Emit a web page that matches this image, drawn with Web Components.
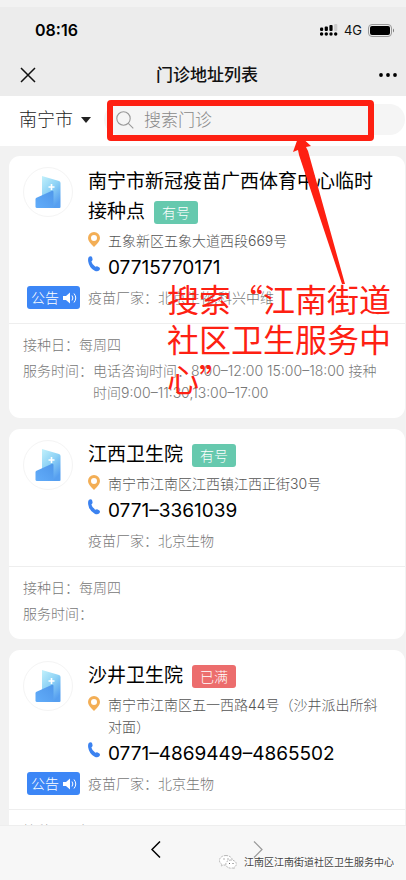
<!DOCTYPE html>
<html lang="zh-CN">
<head>
<meta charset="utf-8">
<meta name="viewport" content="width=device-width, initial-scale=1">
<title>门诊地址列表</title>
<style>
  html, body { margin: 0; height: 100%; }
  body { font-family: Inter, "Noto Sans CJK SC", sans-serif; font-weight: 300; color: #111; background: #f2f2f2; }
</style>
</head>
<body>
<clinic-app></clinic-app>
<script>
const define = (name, html, setup) => {
  const tpl = document.createElement('template');
  tpl.innerHTML = html;
  customElements.define(name, class extends HTMLElement {
    connectedCallback() {
      if (this.shadowRoot) return;
      const root = this.attachShadow({ mode: 'open' });
      root.append(tpl.content.cloneNode(true));
      if (setup) setup(this, root);
    }
  });
};

define('status-bar', `
<style>
  :host { display: flex; align-items: center; justify-content: space-between; height: 46px; margin-top: 7px; padding: 0 12px 0 35px; background: #ececec; }
  time { font-size: 16px; font-weight: 600; color: #000; }
  div { display: flex; align-items: center; gap: 6px; font-size: 13px; font-weight: 400; }
  svg { display: block; }
</style>
<time>08:16</time>
<div>
  <svg width="18" height="12" viewBox="0 0 18 12"><g fill="#000"><rect x="0" y="3.500" width="3.200" height="3.500" rx="1.200"/><rect x="4.700" y="2.500" width="3.200" height="4.500" rx="1"/><rect x="9.400" y="1" width="3.200" height="6" rx="1"/><circle cx="1.600" cy="10" r="1.700"/><circle cx="6.300" cy="10" r="1.700"/><circle cx="11" cy="10" r="1.700"/><circle cx="15.700" cy="10" r="1.700"/></g><rect x="14.100" y="0" width="3.200" height="7" rx="1" fill="#ccc"/></svg>
  <span>4G</span>
  <svg width="26" height="13" viewBox="0 0 26 13"><rect x=".5" y=".5" width="23" height="12" rx="3.500" fill="none" stroke="#999"/><rect x="2" y="2" width="20" height="9" rx="2"/><path d="M25 4.500v4q1-.6 1-2t-1-2z" fill="#777"/></svg>
</div>`);

define('nav-bar', `
<style>
  :host { display: grid; grid-template-columns: 40px 1fr 32px; align-items: center; height: 43px; padding: 0 8px; background: #ececec; }
  h1 { margin: 0; font-size: 17px; line-height: 24px; font-weight: 500; text-align: center; }
  button { border: 0; padding: 0; background: none; display: flex; height: 32px; align-items: center; justify-content: center; color: #111; }
  .more { justify-content: flex-end; }
</style>
<button aria-label="关闭"><svg width="16" height="16" viewBox="0 0 16 16" stroke="currentColor" stroke-width="1.500"><path d="M1 1l14 14M15 1L1 15"/></svg></button>
<h1><slot></slot></h1>
<button class="more" aria-label="更多"><svg width="20" height="6" viewBox="0 0 20 6"><circle cx="3" cy="3" r="1.900"/><circle cx="10" cy="3" r="1.900"/><circle cx="17" cy="3" r="1.900"/></svg></button>`);

define('search-bar', `
<style>
  :host { display: flex; align-items: center; height: 50px; padding: 0 1px 0 19px; gap: 13px; background: #fff; }
  .city { border: 0; padding: 0 0 3px; background: none; display: flex; align-items: center; gap: 8px; font: inherit; font-size: 18px; line-height: 24px; color: #222; white-space: nowrap; }
  label { position: relative; flex: 1; min-width: 0; display: flex; align-items: center; gap: 10px; height: 31px; margin-top: -3px; padding: 0 12px; border-radius: 16px; background: #f5f5f5; }
  input { flex: 1; min-width: 0; border: 0; padding: 0; outline: 0; background: none; font: inherit; font-size: 17px; line-height: 24px; }
  input::placeholder { color: #888; }
  .mark { position: absolute; left: 3px; right: 31px; top: -4px; bottom: -6px; border: 6px solid #fe2012; border-radius: 4px; box-sizing: border-box; pointer-events: none; }
  svg { flex: none; }
</style>
<button class="city">南宁市<svg width="10" height="6" viewBox="0 0 10 6"><path d="M0 0h10L5 6z" fill="#222"/></svg></button>
<label aria-label="搜索门诊">
  <svg width="18" height="18" viewBox="0 0 18 18" fill="none" stroke="#999" stroke-width="1.100"><circle cx="7.500" cy="7.500" r="6.700"/><path d="M12.300 12.300L17.300 17.300"/></svg>
  <input type="search" placeholder="搜索门诊">
  <span class="mark"></span>
</label>`);

define('status-tag', `
<style>
  :host { display: inline-block; padding: 0 8px; border-radius: 3px; font-size: 14px; line-height: 23px; color: #fff; background: #66c9ae; }
  :host([full]) { background: #ec6d6d; }
</style><slot></slot>`);

define('clinic-card', `
<style>
  :host { display: block; background: #fff; border-radius: 11px; font-size: 14px; line-height: 22px; color: #777; }
  .top { display: grid; grid-template-columns: 57px 1fr; column-gap: 8px; padding: 11px 14px 14px 14px; border-bottom: 1px solid #eee; }
  .side { display: flex; flex-direction: column; justify-content: space-between; }
  .logo { display: flex; align-items: center; justify-content: center; width: 48px; height: 48px; border: 1px solid #f4f4f4; border-radius: 50%; }
  .notice { align-self: flex-end; display: flex; align-items: center; gap: 4px; height: 23px; border: 0; border-radius: 3px; padding: 0 3px 0 4px; background: #3c86f6; color: #fff; font: inherit; line-height: 22px; }
  h2 { margin: 0 0 3px; font-size: 19px; line-height: 30px; font-weight: 400; color: #000; }
  h2 status-tag { margin-left: 9px; line-height: 23px; font-weight: 300; }
  .row { display: grid; grid-template-columns: 12px 1fr; column-gap: 8px; margin-bottom: 4px; color: #555; }
  .row svg { margin-top: 2px; }
  .tel { margin-bottom: 7px; line-height: 24px; }
  .tel svg { margin-top: 0; }
  a { font-size: 19px; font-weight: 400; color: #000; text-decoration: none; }
  dl { margin: 0; display: flex; flex-direction: column; gap: 4px; padding: 10px 20px 14px 14px; }
  dl div { display: flex; }
  dt { flex: none; }
  dd { margin: 0; }
  svg { display: block; }
  [hidden] { display: none; }
</style>
<div class="top">
  <div class="side">
    <div class="logo"><svg width="26" height="32" viewBox="0 0 26 32">
      <defs><linearGradient id="a" x1="0" y1="0" x2=".6" y2="1"><stop offset="0" stop-color="#c2f1fb"/><stop offset=".5" stop-color="#8fd3f6"/><stop offset="1" stop-color="#569ff0"/></linearGradient><linearGradient id="b" x1="0" y1="1" x2="1" y2="0"><stop offset="0" stop-color="#62adfa"/><stop offset="1" stop-color="#4f97ea"/></linearGradient></defs>
      <path d="M7 0l17 5q1.500.5 1.500 2V31q0 1-1 1H7z" fill="url(#a)"/><path d="M1 22L16.500 15q2-.8 2 1V32H2q-1.500 0-1.500-1.500V23z" fill="url(#b)"/><path d="M16.500 8v6M13.500 11h6" stroke="#fff" stroke-width="1.600"/></svg></div>
    <button class="notice">公告<svg width="14" height="12" viewBox="0 0 14 12"><path d="M0 4h3l4-3.500v11L3 8H0z" fill="#fff"/><path d="M9 3.500q1.800 2.500 0 5M11 1.500q3.500 4.500 0 9" fill="none" stroke="#fff"/></svg></button>
  </div>
  <div class="info">
    <h2><slot></slot><status-tag></status-tag></h2>
    <div class="row"><svg width="12" height="15" viewBox="0 0 12 15"><path fill-rule="evenodd" d="M6 0a6 6 0 0 1 6 6q0 3.600-6 9Q0 9.600 0 6a6 6 0 0 1 6-6zm0 3a3 3 0 1 0 0 6 3 3 0 0 0 0-6z" fill="#f3ae55"/></svg><span class="addr"></span></div>
    <div class="row tel"><svg width="12" height="16" viewBox="0 0 12 16"><path d="M1 .8Q3.300-.8 4.200 1.500L4.600 3.400Q4.700 4.600 3.400 5.400 4 8.500 7.400 10.800 8.600 9.800 9.700 10.400L11.400 11.600Q12.600 12.800 11.300 14.200 9.500 16 6.700 14.700 1.200 11.800.2 5.400-.3 2 1 .8z" fill="#3b82f0"/></svg><a></a></div>
    <div>疫苗厂家：<span class="maker"></span></div>
  </div>
</div>
<dl><div><dt>接种日：</dt><dd class="day"></dd></div><div><dt>服务时间：</dt><dd class="hours"></dd></div></dl>`,
(el, root) => {
  const d = el.dataset;
  for (const k of ['addr', 'maker', 'day', 'hours']) root.querySelector('.' + k).textContent = d[k] || '';
  const a = root.querySelector('a');
  a.textContent = d.tel; a.href = 'tel:' + d.tel.replace(/–/g, '-');
  const tag = root.querySelector('status-tag');
  tag.textContent = d.full !== undefined ? '已满' : '有号';
  tag.toggleAttribute('full', d.full !== undefined);
  root.querySelector('.notice').hidden = d.notice === undefined;
});

define('bottom-bar', `
<style>
  :host { display: flex; justify-content: center; gap: 86px; height: 55px; padding-left: 8px; background: #f7f7f7; box-sizing: border-box; border-top: 1px solid #eee; position: relative; flex: none; }
  button { border: 0; padding: 0; background: none; width: 16px; height: 49px; color: #000; }
  button:disabled { color: #999; }
  .sign { position: absolute; right: 12px; bottom: 10px; display: flex; align-items: center; gap: 7px; font-size: 10px; line-height: 16px; font-weight: 400; color: #444; text-shadow: 1px 1px 0 #fff; }
</style>
<button aria-label="后退"><svg width="10" height="17" viewBox="0 0 10 17" fill="none" stroke="currentColor" stroke-width="1.500"><path d="M9 .5l-8 8 8 8"/></svg></button>
<button aria-label="前进" disabled><svg width="10" height="17" viewBox="0 0 10 17" fill="none" stroke="currentColor" stroke-width="1.200"><path d="M1 .5l8 8-8 8"/></svg></button>
<div class="sign"><svg width="18" height="14" viewBox="0 0 18 14" fill="#fff" stroke="#999" stroke-width=".7" stroke-dasharray="2 1"><path d="M7 .5c-4 0-6.500 2.300-6.500 5 0 1.600.9 3 2.300 3.800L2.200 11l2.200-1.100c3.500 1 9-.5 9-4.400 0-2.700-2.900-5-6.400-5z"/><path d="M12 5c-3 0-5.200 1.800-5.200 4.100S9 13.200 12 13.200l1.500-.2 1.800.8-.4-1.400c1.500-.8 2.400-2 2.400-3.300C17.300 6.800 15 5 12 5z"/><path d="M5 3.500v1M9 3.500v1M10.500 8v1M14 8v1" stroke="#666" stroke-width="1"/></svg><slot></slot></div>`);

define('hint-note', `
<style>
  :host { position: absolute; left: 167px; top: 137px; width: 230px; color: #fe2012; pointer-events: none; }
  p { margin: 141px 0 0; font-family: "Noto Sans CJK SC", sans-serif; font-size: 32px; line-height: 40px; font-weight: 400; }
  svg { position: absolute; left: 124px; top: 0; }
</style>
<svg width="56" height="148" viewBox="0 0 56 148"><path d="M8 -2L20 9 15 10 17 14 54 147 51 147 8 18 7 13 2 15Z" fill="#fe2012"/></svg>
<p><slot></slot></p>`);

define('clinic-app', `
<style>
  :host { display: flex; flex-direction: column; height: 100vh; min-height: 0; overflow: hidden; position: relative; background: #f2f2f2; }
  status-bar, nav-bar, search-bar { flex: none; }
  main { flex: 1; min-height: 0; overflow: hidden; padding: 10px 1px 0 9px; display: flex; flex-direction: column; gap: 11px; }
  clinic-card { flex: none; }
</style>
<status-bar></status-bar>
<nav-bar>门诊地址列表</nav-bar>
<search-bar></search-bar>
<main>
  <clinic-card data-addr="五象新区五象大道西段669号" data-tel="07715770171" data-maker="北京生物,科兴中维" data-day="每周四" data-hours="电话咨询时间：8:00–12:00 15:00–18:00 接种时间9:00–11:30,13:00–17:00" data-notice>南宁市新冠疫苗广西体育中心临时接种点</clinic-card>
  <clinic-card data-addr="南宁市江南区江西镇江西正街30号" data-tel="0771–3361039" data-maker="北京生物" data-day="每周四">江西卫生院</clinic-card>
  <clinic-card data-addr="南宁市江南区五一西路44号（沙井派出所斜对面）" data-tel="0771–4869449–4865502" data-maker="北京生物" data-day="每周二四" data-full data-notice>沙井卫生院</clinic-card>
</main>
<bottom-bar>江南区江南街道社区卫生服务中心</bottom-bar>
<hint-note>搜索“江南街道社区卫生服务中心”</hint-note>`);
</script>
</body>
</html>
